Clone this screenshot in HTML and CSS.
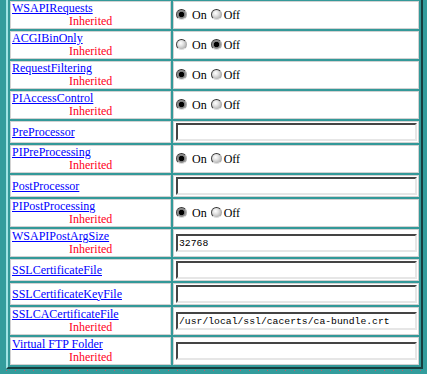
FILE: index.html
```html
<!DOCTYPE html>
<html lang="en">
<head>
    <meta charset="UTF-8">
    <title>Server Directives</title>
    <link rel="stylesheet" href="styles.css">
</head>
<body>
    <div class="page">
        <table class="directives">
            <tr>
                <td class="name"><a href="#">WSAPIRequests</a><span class="inherited">Inherited</span></td>
                <td class="value"><input type="radio" class="radio" name="wsapi" checked> On <input type="radio" class="radio" name="wsapi">Off</td>
            </tr>
            <tr>
                <td class="name"><a href="#">ACGIBinOnly</a><span class="inherited">Inherited</span></td>
                <td class="value"><input type="radio" class="radio" name="acgi"> On <input type="radio" class="radio" name="acgi" checked>Off</td>
            </tr>
            <tr>
                <td class="name"><a href="#">RequestFiltering</a><span class="inherited">Inherited</span></td>
                <td class="value"><input type="radio" class="radio" name="filter" checked> On <input type="radio" class="radio" name="filter">Off</td>
            </tr>
            <tr>
                <td class="name"><a href="#">PIAccessControl</a><span class="inherited">Inherited</span></td>
                <td class="value"><input type="radio" class="radio" name="access" checked> On <input type="radio" class="radio" name="access">Off</td>
            </tr>
            <tr>
                <td class="name"><a href="#">PreProcessor</a></td>
                <td class="value"><input type="text" class="field"></td>
            </tr>
            <tr>
                <td class="name"><a href="#">PIPreProcessing</a><span class="inherited">Inherited</span></td>
                <td class="value"><input type="radio" class="radio" name="prepro" checked> On <input type="radio" class="radio" name="prepro">Off</td>
            </tr>
            <tr>
                <td class="name"><a href="#">PostProcessor</a></td>
                <td class="value"><input type="text" class="field"></td>
            </tr>
            <tr>
                <td class="name"><a href="#">PIPostProcessing</a><span class="inherited">Inherited</span></td>
                <td class="value"><input type="radio" class="radio" name="postpro" checked> On <input type="radio" class="radio" name="postpro">Off</td>
            </tr>
            <tr>
                <td class="name"><a href="#">WSAPIPostArgSize</a><span class="inherited">Inherited</span></td>
                <td class="value"><input type="text" class="field" value="32768"></td>
            </tr>
            <tr>
                <td class="name"><a href="#">SSLCertificateFile</a></td>
                <td class="value"><input type="text" class="field"></td>
            </tr>
            <tr>
                <td class="name"><a href="#">SSLCertificateKeyFile</a></td>
                <td class="value"><input type="text" class="field"></td>
            </tr>
            <tr>
                <td class="name"><a href="#">SSLCACertificateFile</a><span class="inherited">Inherited</span></td>
                <td class="value"><input type="text" class="field" value="/usr/local/ssl/cacerts/ca-bundle.crt"></td>
            </tr>
            <tr>
                <td class="name"><a href="#">Virtual FTP Folder</a><span class="inherited">Inherited</span></td>
                <td class="value"><input type="text" class="field"></td>
            </tr>
        </table>
    </div>
</body>
</html>
```

FILE: styles.css
```css
body {
    margin: 0;
    font-family: "Liberation Serif", "Times New Roman", serif;
    font-size: 12px;
    background-color: #339c9c;
    background-image:
        radial-gradient(circle, #b8606c 0.7px, transparent 1px),
        radial-gradient(circle, #a35a70 0.7px, transparent 1px);
    background-size: 9px 7px, 13px 11px;
    background-position: 2px 3px, 6px 8px;
}
.page {
    padding: 0 6px;
}
.directives {
    width: 417px;
    margin-top: -3px;
    table-layout: fixed;
    border-collapse: separate;
    border-spacing: 2px;
    border: 2px solid;
    border-color: #9fe3e3 #173f3f #173f3f #9fe3e3;
    background: #339999;
}
.directives td {
    background: #fff;
    border: 1px solid #d2d2d2;
    padding: 0 1px;
    line-height: 13px;
    vertical-align: middle;
}
.directives td.name {
    width: 157px;
}
.directives td.value {
    width: 242px;
}
.name a {
    color: #0000ff;
}
.inherited {
    display: block;
    padding-left: 57px;
    color: #ff0022;
}
.radio {
    appearance: none;
    -webkit-appearance: none;
    box-sizing: border-box;
    width: 11px;
    height: 11px;
    margin: 0 2px 0 1px;
    vertical-align: -1px;
    border-radius: 50%;
    border: 1px solid;
    border-color: #333 #aaa #ddd #444;
    background: radial-gradient(circle at 40% 35%, #fff 0, #e2e2e2 35%, #9a9a9a 100%);
}
.radio:checked {
    background: radial-gradient(circle, #000 0, #000 2.4px, #7a7a7a 3px, #c4c4c4 100%);
}
.field {
    display: block;
    box-sizing: border-box;
    width: 241px;
    height: 18px;
    margin: 1px 0 1px 1px;
    padding: 0 1px;
    border: 2px solid;
    border-color: #444 #e6e6e6 #e6e6e6 #444;
    background: #fff;
    font-family: "Liberation Mono", "Courier New", monospace;
    font-size: 9.75px;
    color: #000;
    outline: none;
}
```
